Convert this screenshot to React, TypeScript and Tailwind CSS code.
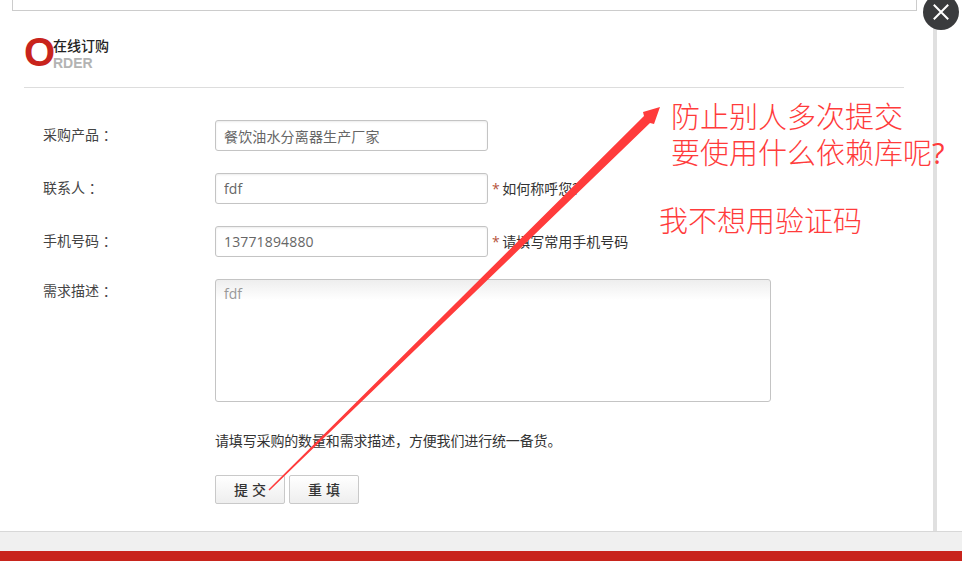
const cjk = "font-['Open_Sans','Noto_Sans_CJK_SC',sans-serif]";

function Field({ label, value, hint }: { label: string; value: string; hint?: string }) {
  return (
    <div className="flex h-[31px] items-center">
      <label className="w-[172px] pb-[2px] text-[14px] text-[#444]">{label}</label>
      <input
        readOnly
        value={value}
        className="h-[31px] w-[273px] rounded-[3px] border border-[#c4c4c4] bg-white px-2 text-[14px] tracking-[0.15px] text-[#666] shadow-[inset_0_1px_2px_rgba(0,0,0,0.08)] outline-none"
      />
      {hint && (
        <span className="ml-1 text-[14px] text-[#333]">
          <span className="mr-[-1px] text-[#b5533c]">*</span> {hint}
        </span>
      )}
    </div>
  );
}

export default function App() {
  return (
    <div className={`relative h-[561px] w-[962px] overflow-hidden bg-white ${cjk}`}>
      <div className="flex h-[531px]">
        <div className="w-[933px]">
          <div className="ml-3 h-[11px] w-[905px] border-x border-b border-[#ccc]" />

          {/* title */}
          <div className="mx-6 flex h-[77px] w-[880px] border-b border-[#ddd] pt-[25px] font-['Liberation_Sans','Noto_Sans_CJK_SC',sans-serif]">
            <span className="h-[32px] w-[29px] text-[40px] leading-[32px] font-bold text-[#c8241c]">O</span>
            <div className="flex flex-col">
              <span className="text-[14px] leading-[20px] font-medium text-[#222]">在线订购</span>
              <span className="text-[14px] leading-[14px] font-bold text-[#b3b3b3]">RDER</span>
            </div>
          </div>

          {/* form */}
          <div className="flex flex-col gap-[22px] pt-[32px] pl-[43px]">
            <Field label="采购产品 ：" value="餐饮油水分离器生产厂家" />
            <Field label="联系人 ：" value="fdf" hint="如何称呼您？" />
            <Field label="手机号码 ：" value="13771894880" hint="请填写常用手机号码" />
            <div className="flex">
              <label className="w-[172px] pt-[1px] text-[14px] text-[#444]">需求描述 ：</label>
              <textarea
                readOnly
                value="fdf"
                className="h-[123px] w-[556px] resize-none rounded-[3px] border border-[#c4c4c4] bg-gradient-to-b from-[#eeeeee] to-white to-[20px] px-2 py-[3px] text-[14px] text-[#999] outline-none"
              />
            </div>
          </div>
          <p className="mt-[29px] ml-[215px] text-[14px] leading-[20px] tracking-[-0.15px] text-[#333]">
            请填写采购的数量和需求描述，方便我们进行统一备货。
          </p>
          <div className="mt-[24px] ml-[215px] flex gap-1">
            <button className="h-[29px] w-[70px] rounded-[2px] border border-[#c9c9c9] bg-gradient-to-b from-white to-[#eeeeee] pl-1 text-[14px] font-medium tracking-[4px] text-[#333]">
              提交
            </button>
            <button className="h-[29px] w-[70px] rounded-[2px] border border-[#c9c9c9] bg-gradient-to-b from-white to-[#eeeeee] pl-1 text-[14px] font-medium tracking-[4px] text-[#333]">
              重填
            </button>
          </div>
        </div>
        <div className="h-full w-1 bg-[#e0e0e0]" />
      </div>

      <div className="h-5 border-t border-[#d8d8d8] bg-[#f0f0f0]" />
      <div className="h-[10px] bg-[#c8241c]" />

      {/* close button */}
      <button className="absolute top-[-6px] left-[923px] flex h-9 w-9 items-center justify-center rounded-full bg-[#3a3b3d]">
        <svg width="16" height="16" viewBox="0 0 16 16" fill="none" stroke="white" strokeWidth="2">
          <path d="M0.8 0.8 15.2 15.2M15.2 0.8 0.8 15.2" />
        </svg>
      </button>

      {/* annotation drawn over the page */}
      <svg className="absolute top-0 left-0" width="962" height="561" viewBox="0 0 962 561">
        <path d="M268.5 489.5 L644 116 L643 112 L660 107 L654 124 L650 123 L269.5 490.5 Z" fill="#ff3b3b" />
      </svg>
      <div className="absolute top-[99px] left-[671px] text-[29px] leading-[36px] font-light whitespace-nowrap text-[#ff3b3b]">
        <div>防止别人多次提交</div>
        <div>
          要使用什么依赖库呢<span className="font-medium">?</span>
        </div>
      </div>
      <div className="absolute top-[203px] left-[659px] text-[29px] leading-[36px] font-light whitespace-nowrap text-[#ff3b3b]">
        我不想用验证码
      </div>
    </div>
  );
}
